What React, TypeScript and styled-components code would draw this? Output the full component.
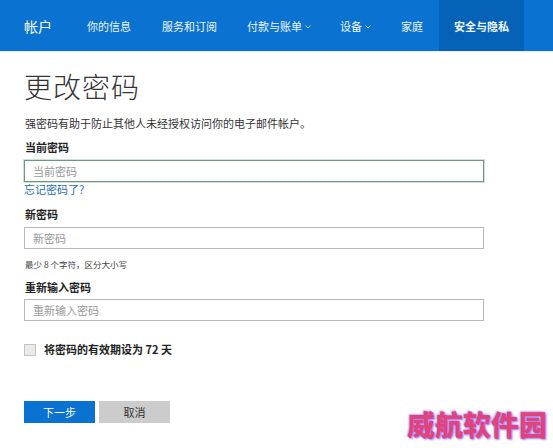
import React from "react";
import styled, { createGlobalStyle } from "styled-components";

const Global = createGlobalStyle`
  html, body { margin: 0; padding: 0; background: #fff; }
  body { font-family: "Noto Sans CJK SC", "Noto Sans", sans-serif; color: #333; }
  * { box-sizing: border-box; }
`;

const Page = styled.div`
  position: relative;
  width: 553px;
  height: 448px;
  overflow: hidden;
  background: #fff;
`;

const NavBar = styled.nav`
  height: 52px;
  background: #0a72d0;
  display: flex;
  align-items: stretch;
  padding-left: 24px;
  border-bottom: 1px solid #e6eef7;
`;

const Brand = styled.div`
  display: flex;
  align-items: center;
  font-size: 14px;
  color: #fff;
  margin-right: 35px;
  white-space: nowrap;
`;

const NavItem = styled.div<{ $active?: boolean; $gap?: number }>`
  display: flex;
  align-items: center;
  justify-content: center;
  white-space: nowrap;
  flex: none;
  color: #eef6ff;
  font-size: 11px;
  padding: 0 ${(p) => (p.$active ? 15 : 0)}px;
  margin-right: ${(p) => p.$gap ?? 30}px;
  background: ${(p) => (p.$active ? "#0662b6" : "transparent")};
  font-weight: ${(p) => (p.$active ? 700 : 400)};
`;

const Caret = () => (
  <svg width="6" height="4" viewBox="0 0 6 4" style={{ marginLeft: 3, marginTop: 2 }}>
    <path d="M0.5 0.5 L3 3 L5.5 0.5" fill="none" stroke="#cfe3f7" strokeWidth="0.9" />
  </svg>
);

const Main = styled.main`
  padding: 16px 24px 0 24px;
  display: flex;
  flex-direction: column;
`;

const Title = styled.h1`
  margin: 0;
  font-size: 28px;
  font-weight: 300;
  color: #333;
  letter-spacing: 1px;
  line-height: 36px;
`;

const Desc = styled.p`
  margin: 11px 0 0 1px;
  font-size: 11px;
  color: #333;
  line-height: 16px;
`;

const Label = styled.div<{ $mt: number }>`
  margin-top: ${(p) => p.$mt}px;
  font-size: 11px;
  font-weight: 700;
  color: #222;
  line-height: 16px;
  margin-left: 1px;
`;

const Input = styled.input<{ $focus?: boolean; $mt: number }>`
  display: block;
  width: 460px;
  height: 22px;
  margin-top: ${(p) => p.$mt}px;
  border: 1px solid ${(p) => (p.$focus ? "#6f9780" : "#b8b8b8")};
  box-shadow: ${(p) => (p.$focus ? "0 0 0 1px #d3e0d5" : "none")};
  padding: 0 8px;
  font-size: 11px;
  font-family: inherit;
  color: #333;
  background: #fff;
  outline: none;
  &::placeholder { color: #999; }
`;

const Link = styled.a`
  font-size: 11px;
  color: #1f6fb5;
  line-height: 14px;
  text-decoration: none;
`;

const Hint = styled.div`
  margin-top: 9px;
  font-size: 8.5px;
  color: #444;
  line-height: 12px;
  margin-left: 1px;
`;

const CheckRow = styled.label`
  display: flex;
  align-items: center;
  gap: 8px;
  margin-top: 20px;
  font-size: 11px;
  font-weight: 700;
  color: #222;
  line-height: 17px;
`;

const Box = styled.span`
  width: 12px;
  height: 12px;
  border: 1px solid #c4c4c4;
  background: #eaeaea;
  display: inline-block;
`;

const Buttons = styled.div`
  display: flex;
  gap: 4px;
  margin-top: 43px;
`;

const Btn = styled.button<{ $primary?: boolean }>`
  width: 71px;
  height: 22px;
  border: none;
  font-size: 11px;
  font-family: inherit;
  background: ${(p) => (p.$primary ? "#0a72d0" : "#cccccc")};
  color: ${(p) => (p.$primary ? "#fff" : "#333")};
  padding: 0;
`;

const Watermark = styled.div`
  position: absolute;
  left: 407px;
  top: 404px;
  font-size: 28px;
  font-weight: 900;
  color: #e2437a;
  white-space: nowrap;
  text-shadow: 1px 1px 2px #8a78ff, -1px -1px 2px #b9a6ff;
`;

export default function App() {
  return (
    <Page>
      <Global />
      <NavBar>
        <Brand>帐户</Brand>
        <NavItem $gap={31}>你的信息</NavItem>
        <NavItem>服务和订阅</NavItem>
        <NavItem $gap={29}>付款与账单<Caret /></NavItem>
        <NavItem>设备<Caret /></NavItem>
        <NavItem $gap={16}>家庭</NavItem>
        <NavItem $active $gap={0}>安全与隐私</NavItem>
      </NavBar>
      <Main>
        <Title>更改密码</Title>
        <Desc>强密码有助于防止其他人未经授权访问你的电子邮件帐户。</Desc>
        <Label $mt={8}>当前密码</Label>
        <Input $focus $mt={5} placeholder="当前密码" />
        <Link href="#">忘记密码了?</Link>
        <Label $mt={10}>新密码</Label>
        <Input $mt={5} placeholder="新密码" />
        <Hint>最少 8 个字符，区分大小写</Hint>
        <Label $mt={9}>重新输入密码</Label>
        <Input $mt={4} placeholder="重新输入密码" />
        <CheckRow><Box />将密码的有效期设为 72 天</CheckRow>
        <Buttons>
          <Btn $primary>下一步</Btn>
          <Btn>取消</Btn>
        </Buttons>
      </Main>
      <Watermark>威航软件园</Watermark>
    </Page>
  );
}
